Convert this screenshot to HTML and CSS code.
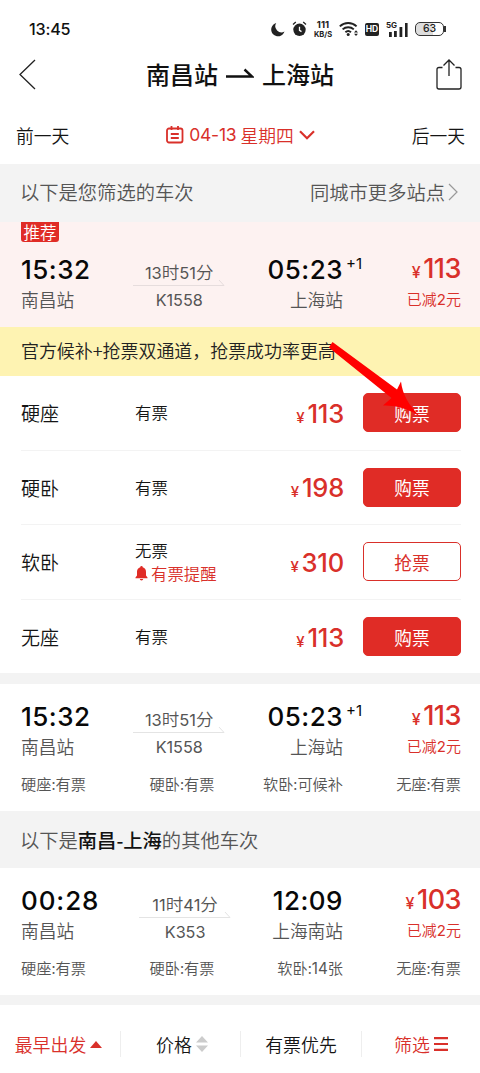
FILE: index.html
```html
<!DOCTYPE html>
<html lang="zh-CN">
<head>
<meta charset="utf-8">
<title>南昌站 - 上海站</title>
<link rel="stylesheet" href="styles.css">
</head>
<body>
<div class="screen">
  <header class="status">
    <span class="clock">13:45</span>
    <div class="status-icons">
      <svg class="moon" width="14" height="15" viewBox="0 0 14 15"><path d="M5.200 1A6.800 6.800 0 1 0 13.500 9.600 6.200 6.200 0 0 1 5.200 1Z" fill="#222"/></svg>
      <svg class="alarm" width="15" height="16" viewBox="0 0 15 16"><circle cx="7.500" cy="8.800" r="6.200" fill="#222"/><path d="M1 3.500 3.800 1M14 3.500 11.200 1" stroke="#222" stroke-width="1.300" fill="none"/><path d="M7.500 5.800V9.300L9.500 10.600" stroke="#fff" stroke-width="1.300" fill="none"/></svg>
      <div class="speed"><b>111</b><span>KB/S</span></div>
      <svg class="wifi" width="20" height="16" viewBox="0 0 20 16"><g fill="none" stroke="#222" stroke-width="1.900"><path d="M.8 5.400A12.200 12.200 0 0 1 17.600 5.400"/><path d="M3.600 8.400A8.200 8.200 0 0 1 14.800 8.400"/><path d="M6.400 11.300A4.200 4.200 0 0 1 12 11.300"/></g><circle cx="9.200" cy="13.600" r="1.500" fill="#222"/><path d="M15 11.400 17 9.200 19 11.400ZM15 12.800 17 15 19 12.800Z" fill="#222"/></svg>
      <span class="hd">HD</span>
      <div class="signal"><svg width="21" height="15" viewBox="0 0 21 15"><path d="M2 10h2.800v5H2zM7 9h2.800v6H7zM12.500 5h2.800v10h-2.800zM18 1h2.600v14H18z" fill="#222"/></svg><span>5G</span></div>
      <div class="battery"><span>63</span></div>
    </div>
  </header>

  <nav class="nav">
    <svg class="back" width="17" height="31" viewBox="0 0 17 31"><path d="M16 1 1 15.500 16 30" fill="none" stroke="#222" stroke-width="1.300"/></svg>
    <h1 class="route"><span>南昌站</span><svg width="28" height="12" viewBox="0 0 28 12"><path d="M0 8.500H26L18.500 1.500" fill="none" stroke="#111" stroke-width="2.400"/></svg><span>上海站</span></h1>
    <svg class="share" width="26" height="31" viewBox="0 0 26 31"><g fill="none" stroke="#222" stroke-width="1.300"><path d="M6.500 8.500H3Q1 8.500 1 10.500V28Q1 30 3 30H23Q25 30 25 28V10.500Q25 8.500 23 8.500H19.500"/><path d="M13 17V1.500M7.500 6.500 13 1 18.500 6.500"/></g></svg>
  </nav>

  <div class="days">
    <span>前一天</span>
    <div class="date">
      <svg width="18" height="18" viewBox="0 0 18 18"><g fill="none" stroke="#d9302a" stroke-width="1.800"><rect x="1" y="2.500" width="15.500" height="14" rx="2"/><path d="M5.500 0V4M12 0V4M4.800 8H12.800M4.800 12H12.800"/></g></svg>
      <span class="date-num">04-13</span><span>星期四</span>
      <svg class="down" width="16" height="10" viewBox="0 0 16 10"><path d="M1 1.200 8 8.200 15 1.200" fill="none" stroke="#d9302a" stroke-width="2.200"/></svg>
    </div>
    <span>后一天</span>
  </div>

  <div class="group-head">
    <span>以下是您筛选的车次</span>
    <span class="more">同城市更多站点<svg width="10" height="18" viewBox="0 0 10 18"><path d="M1 1 9 9 1 17" fill="none" stroke="#999" stroke-width="1.200"/></svg></span>
  </div>

  <section class="train recommended">
    <span class="tag">推荐</span>
    <div class="trip">
      <div class="times">
        <div class="stop"><b class="t1532">15:32</b><span>南昌站</span></div>
        <div class="mid"><div class="duration"><i>13</i>时<i>51</i>分</div><svg width="93" height="8" viewBox="0 0 93 8"><path d="M0 6.500H91L86 1" fill="none" stroke="#e6dddd"/></svg><div class="code">K1558</div></div>
        <div class="stop end"><b class="t0523">05:23<sup>+1</sup></b><span>上海站</span></div>
      </div>
      <div class="price"><div><small>¥</small>113</div><span>已减<i>2</i>元</span></div>
    </div>
  </section>

  <div class="notice">官方候补+抢票双通道，抢票成功率更高
    <svg class="pointer" width="92" height="76" viewBox="0 0 92 76"><path d="M4.500 0 69 47.500 73 39.500Q75 58 92 74.500Q74 62.500 55 63.500L63.500 56L.8 5.500Z" fill="#f00"/></svg>
  </div>

  <section class="seats">
    <div class="seat"><span class="kind">硬座</span><div class="left">有票</div><div class="fare"><small>¥</small>113</div><button class="buy">购票</button></div>
    <div class="seat"><span class="kind">硬卧</span><div class="left">有票</div><div class="fare"><small>¥</small>198</div><button class="buy">购票</button></div>
    <div class="seat"><span class="kind">软卧</span><div class="left">无票<div class="remind"><svg width="13" height="15" viewBox="0 0 13 15"><path d="M6.500 0A1.200 1.200 0 0 1 7.700 1.300C10 2 11 3.700 11 6V9.500L12.500 11.500V12.200H.5V11.500L2 9.500V6C2 3.700 3 2 5.300 1.300A1.200 1.200 0 0 1 6.500 0ZM4.800 13H8.200A1.700 1.400 0 0 1 4.800 13Z" fill="#e02c26"/></svg>有票提醒</div></div><div class="fare"><small>¥</small>310</div><button class="buy outline">抢票</button></div>
    <div class="seat"><span class="kind">无座</span><div class="left">有票</div><div class="fare"><small>¥</small>113</div><button class="buy">购票</button></div>
  </section>

  <section class="train">
    <div class="trip">
      <div class="times">
        <div class="stop"><b class="t1532">15:32</b><span>南昌站</span></div>
        <div class="mid"><div class="duration"><i>13</i>时<i>51</i>分</div><svg width="93" height="8" viewBox="0 0 93 8"><path d="M0 6.500H91L86 1" fill="none" stroke="#e4e4e4"/></svg><div class="code">K1558</div></div>
        <div class="stop end"><b class="t0523">05:23<sup>+1</sup></b><span>上海站</span></div>
      </div>
      <div class="price"><div><small>¥</small>113</div><span>已减<i>2</i>元</span></div>
    </div>
    <div class="stock"><div><span>硬座:有票</span><span>硬卧:有票</span><span>软卧:可候补</span></div><span>无座:有票</span></div>
  </section>

  <div class="group-head other"><span>以下是<strong>南昌-上海</strong>的其他车次</span></div>

  <section class="train last">
    <div class="trip">
      <div class="times">
        <div class="stop"><b class="t0028">00:28</b><span>南昌站</span></div>
        <div class="mid"><div class="duration"><i>11</i>时<i>41</i>分</div><svg width="93" height="8" viewBox="0 0 93 8"><path d="M0 6.500H91L86 1" fill="none" stroke="#e4e4e4"/></svg><div class="code">K353</div></div>
        <div class="stop end"><b class="t1209">12:09</b><span>上海南站</span></div>
      </div>
      <div class="price"><div><small>¥</small>103</div><span>已减<i>2</i>元</span></div>
    </div>
    <div class="stock"><div><span>硬座:有票</span><span>硬卧:有票</span><span>软卧:<i>14</i>张</span></div><span>无座:有票</span></div>
  </section>

  <footer class="filters">
    <div class="active">最早出发<svg width="12" height="7" viewBox="0 0 12 7"><path d="M0 7 6 0 12 7Z" fill="#d9302a"/></svg></div>
    <div>价格<svg width="12" height="16" viewBox="0 0 12 16"><path d="M0 6.500 6 0 12 6.500ZM0 9.500 6 16 12 9.500Z" fill="#ccc"/></svg></div>
    <div>有票优先</div>
    <div class="active">筛选<svg width="14" height="14" viewBox="0 0 14 14"><path d="M0 1.200H14M0 7H14M0 12.800H14" stroke="#d9302a" stroke-width="2.200"/></svg></div>
  </footer>
</div>
</body>
</html>
```

FILE: styles.css
```css
* { box-sizing: border-box; }
body {
  margin: 0;
  background: #fff;
  color: #151515;
  font-family: "Noto Sans CJK SC", sans-serif;
  font-weight: 350;
}
i { font-style: normal; font-family: Inter, sans-serif; font-weight: 400; }
svg { flex: none; }
.screen { width: 480px; height: 1073px; overflow: hidden; }

.status { display: flex; justify-content: space-between; height: 58px; padding: 19px 36px 0 29px; }
.clock { font: 500 16.200px/21px Inter, sans-serif; color: #111; letter-spacing: -.2px; }
.status-icons { display: flex; align-items: center; height: 20px; color: #222; }
.alarm { margin-left: 7px; }
.speed { display: flex; flex-direction: column; align-items: center; width: 20px; margin-left: 6px; font-family: Inter, sans-serif; }
.speed b { font-size: 9.500px; line-height: 11px; font-weight: 700; }
.speed span { font-size: 7.500px; line-height: 9px; font-weight: 700; }
.wifi { margin-left: 6px; }
.hd { width: 14px; height: 13px; margin-left: 6px; border-radius: 2px; background: #222; color: #fff; font: 700 8.500px/13px Inter, sans-serif; text-align: center; }
.signal { position: relative; width: 21px; height: 15px; margin-left: 8px; }
.signal svg { display: block; }
.signal span { position: absolute; left: -1px; top: -1px; font: 700 8px/8px Inter, sans-serif; }
.battery { position: relative; width: 29px; height: 14px; margin-left: 7px; border: 1px solid #333; border-radius: 5px; background: linear-gradient(90deg, #ddd 63%, #fff 63%); font: 500 10.500px/12px Inter, sans-serif; text-align: center; }
.battery::after { content: ""; position: absolute; right: -3px; top: 3px; width: 2px; height: 6px; background: #333; }

.nav { display: flex; justify-content: space-between; align-items: center; height: 32px; padding: 0 18px 0 19px; }
.route { display: flex; align-items: center; gap: 8px; margin: 0 0 0 8px; font-size: 24px; line-height: 32px; font-weight: 500; color: #111; }

.days { display: flex; justify-content: space-between; align-items: center; height: 74px; padding: 15px 15px 0 16px; font-size: 17.800px; line-height: 26px; }
.date { display: flex; align-items: center; color: #d9302a; }
.date-num { margin: 0 4px 0 5px; font-family: Inter, sans-serif; font-size: 17.500px; font-weight: 400; letter-spacing: -.2px; }
.down { margin-left: 5px; }

.group-head { display: flex; justify-content: space-between; align-items: center; height: 58px; padding: 0 22px 2px 20px; background: #f3f3f3; font-size: 19.300px; line-height: 28px; color: #555; }
.more { display: flex; align-items: center; gap: 3px; }
.group-head strong { color: #111; font-weight: 500; }
.other { height: 57px; padding-bottom: 0; }

.train { height: 127px; padding: 18px 19px 0 21px; }
.recommended { height: 105px; padding-top: 0; background: #fdf2f1; }
.tag { display: block; width: 38px; height: 20px; margin-bottom: 13px; border-radius: 0 0 3px 3px; background: #e02c26; color: #fff; font-size: 16.500px; line-height: 20px; text-align: center; }
.trip { display: flex; justify-content: space-between; height: 60px; }
.times { display: flex; justify-content: space-between; width: 322px; }
.stop { display: flex; flex-direction: column; color: #555; font-size: 17.700px; line-height: 30px; }
.stop b { position: relative; color: #080808; font: 450 26px/29px Inter, sans-serif; letter-spacing: .5px; white-space: nowrap; }
.stop .t1532 { width: 70px; }
.stop .t0028 { width: 77px; letter-spacing: .9px; }
.end { align-items: flex-end; }
sup { position: absolute; left: 100%; top: -1px; margin-left: 3px; font: 400 15px/20px Inter, sans-serif; letter-spacing: 0; }
.mid { display: flex; flex-direction: column; align-items: center; padding-top: 5px; font-size: 17.500px; line-height: 24px; color: #555; }
.duration { height: 19px; white-space: nowrap; }
.duration i { font-size: 16.500px; }
.code { font: 400 16.200px/24px Inter, sans-serif; margin-top: 1px; }
.last .mid { padding-top: 6px; }
.price { display: flex; flex-direction: column; align-items: flex-end; color: #d9302a; font-size: 15px; line-height: 24px; }
.price > div { margin-top: -1px; font: 500 27px/30px Inter, sans-serif; letter-spacing: -.5px; }
.price small { margin-right: 3px; font-size: 16px; font-weight: 500; }

.notice { position: relative; height: 49px; padding-left: 21px; background: #fef3b2; color: #222; font-size: 17.950px; line-height: 47px; }
.pointer { position: absolute; left: 328px; top: 15px; z-index: 1; }

.seats { height: 308px; padding: 0 19px 0 21px; border-bottom: 11px solid #f3f3f3; }
.seat { display: grid; grid-template-columns: 114px 1fr 117px 98px; align-items: center; height: 74.500px; border-bottom: 1px solid #f3f3f3; }
.seat:last-child { border: 0; }
.kind { font-size: 19px; }
.left { font-size: 16.400px; line-height: 24px; padding-bottom: 1px; }
.remind { display: flex; align-items: center; gap: 3px; height: 22px; color: #d9302a; white-space: nowrap; }
.fare { padding: 6px 19px 0 0; color: #d9302a; font: 450 25.500px/30px Inter, sans-serif; letter-spacing: -.2px; text-align: right; white-space: nowrap; }
.fare small { margin-right: 3px; font-size: 15px; font-weight: 500; }
.buy { height: 39px; padding: 0; border: 1px solid #e02c26; border-radius: 5px; background: #e02c26; color: #fff; font: 400 17.700px/36px "Noto Sans CJK SC", sans-serif; }
.outline { background: #fff; color: #d9302a; border-color: #d9302a; }

.stock { display: flex; justify-content: space-between; margin-top: 11px; font-size: 15.200px; line-height: 20px; color: #555; }
.stock > div { display: grid; grid-template-columns: 1fr 1fr 1fr; width: 322px; }
.stock div span:nth-child(2) { text-align: center; }
.stock div span:nth-child(3) { text-align: right; }

.filters { display: grid; grid-template-columns: 121px 120px 121px 118px; height: 78px; padding-top: 20px; border-top: 10px solid #f3f3f3; font-size: 17.900px; line-height: 36px; }
.filters > div { display: flex; align-items: center; justify-content: center; gap: 4px; height: 26px; margin-top: 6px; border-right: 1px solid #eee; }
.filters > div:first-child { padding-right: 3px; }
.filters > div:nth-child(2) { padding-left: 3px; }
.filters > div:last-child { border: 0; }
.active { color: #d9302a; }
```
